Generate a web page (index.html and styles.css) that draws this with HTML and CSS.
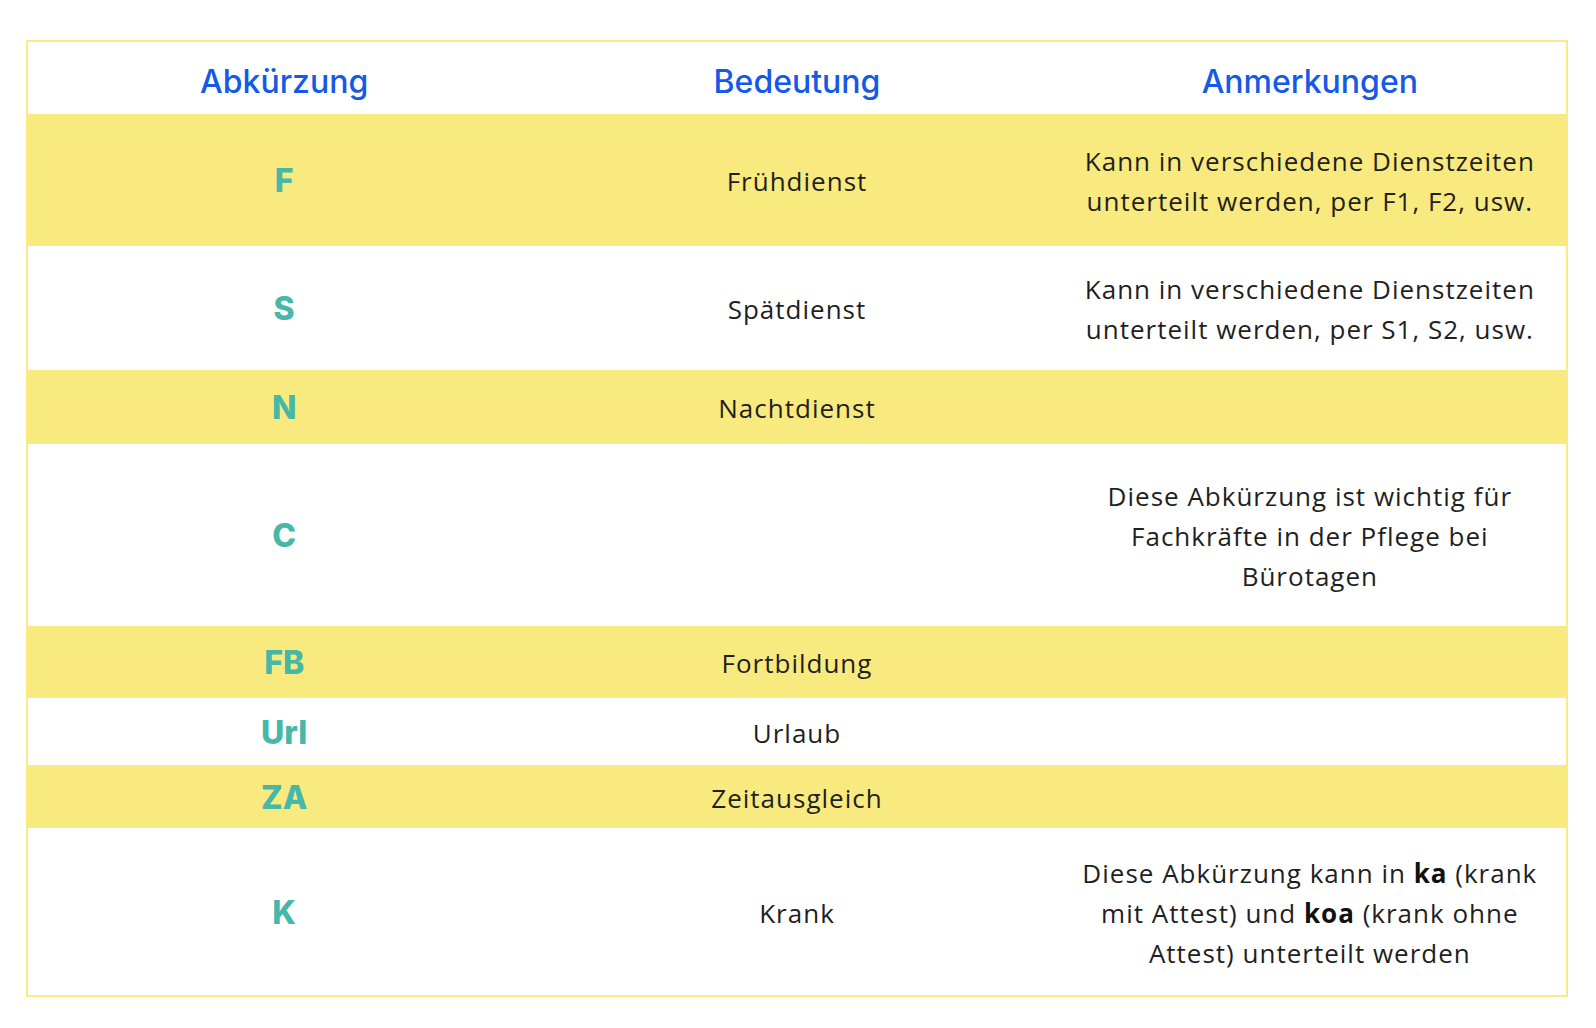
FILE: index.html
```html
<!DOCTYPE html>
<html lang="de">
<head>
<meta charset="utf-8">
<title>Abkürzungen</title>
<link rel="stylesheet" href="styles.css">
</head>
<body>
<div class="page">
  <table class="abbr-table">
    <colgroup><col class="col"><col class="col"><col class="col"></colgroup>
    <thead>
      <tr class="head-row">
        <th>Abkürzung</th>
        <th>Bedeutung</th>
        <th>Anmerkungen</th>
      </tr>
    </thead>
    <tbody>
      <tr class="row yellow r-f">
        <td class="abbr">F</td>
        <td>Frühdienst</td>
        <td class="note">Kann in verschiedene Dienstzeiten unterteilt werden, per F1, F2, usw.</td>
      </tr>
      <tr class="row r-s">
        <td class="abbr">S</td>
        <td>Spätdienst</td>
        <td class="note">Kann in verschiedene Dienstzeiten unterteilt werden, per S1, S2, usw.</td>
      </tr>
      <tr class="row yellow r-n">
        <td class="abbr">N</td>
        <td>Nachtdienst</td>
        <td class="note"></td>
      </tr>
      <tr class="row r-c">
        <td class="abbr">C</td>
        <td></td>
        <td class="note">Diese Abkürzung ist wichtig für Fachkräfte in der Pflege bei Bürotagen</td>
      </tr>
      <tr class="row yellow r-fb">
        <td class="abbr">FB</td>
        <td>Fortbildung</td>
        <td class="note"></td>
      </tr>
      <tr class="row r-url">
        <td class="abbr">Url</td>
        <td>Urlaub</td>
        <td class="note"></td>
      </tr>
      <tr class="row yellow r-za">
        <td class="abbr">ZA</td>
        <td>Zeitausgleich</td>
        <td class="note"></td>
      </tr>
      <tr class="row r-k">
        <td class="abbr">K</td>
        <td>Krank</td>
        <td class="note">Diese Abkürzung kann in <strong>ka</strong> (krank mit Attest) und <strong>koa</strong> (krank ohne Attest) unterteilt werden</td>
      </tr>
    </tbody>
  </table>
</div>
</body>
</html>
```

FILE: styles.css
```css
html, body {
  margin: 0;
  padding: 0;
  background: #ffffff;
}

.page {
  padding: 40px 28px 0 26px;
}

.abbr-table {
  width: 100%;
  border-collapse: collapse;
  table-layout: fixed;
  border: 2px solid #f9ea86;
  font-family: "Open Sans", "Liberation Sans", sans-serif;
  color: #1f1f1f;
}

.col {
  width: 33.333%;
}

.abbr-table th,
.abbr-table td {
  padding: 0 20px;
  text-align: center;
  vertical-align: middle;
}

.head-row {
  height: 73px;
}

.abbr-table th {
  font-family: "Inter", "Open Sans", sans-serif;
  font-weight: 500;
  font-size: 32px;
  color: #1559e8;
  padding-top: 6px;
}

.abbr-table td {
  font-size: 26px;
  font-weight: 500;
  line-height: 40px;
  letter-spacing: 1px;
  padding-top: 2px;
}

.abbr-table td.abbr {
  font-family: "Inter", "Open Sans", sans-serif;
  font-weight: 800;
  font-size: 32px;
  letter-spacing: 0;
  color: #47b8a7;
}

.abbr-table td strong {
  font-weight: 700;
  color: #111111;
}

.yellow {
  background: #f9ea7f;
}

.r-f { height: 132px; }
.r-s { height: 124px; }
.r-n { height: 74px; }
.r-c { height: 182px; }
.r-fb { height: 72px; }
.r-url { height: 67px; }
.r-za { height: 63px; }
.r-k { height: 168px; }
```
